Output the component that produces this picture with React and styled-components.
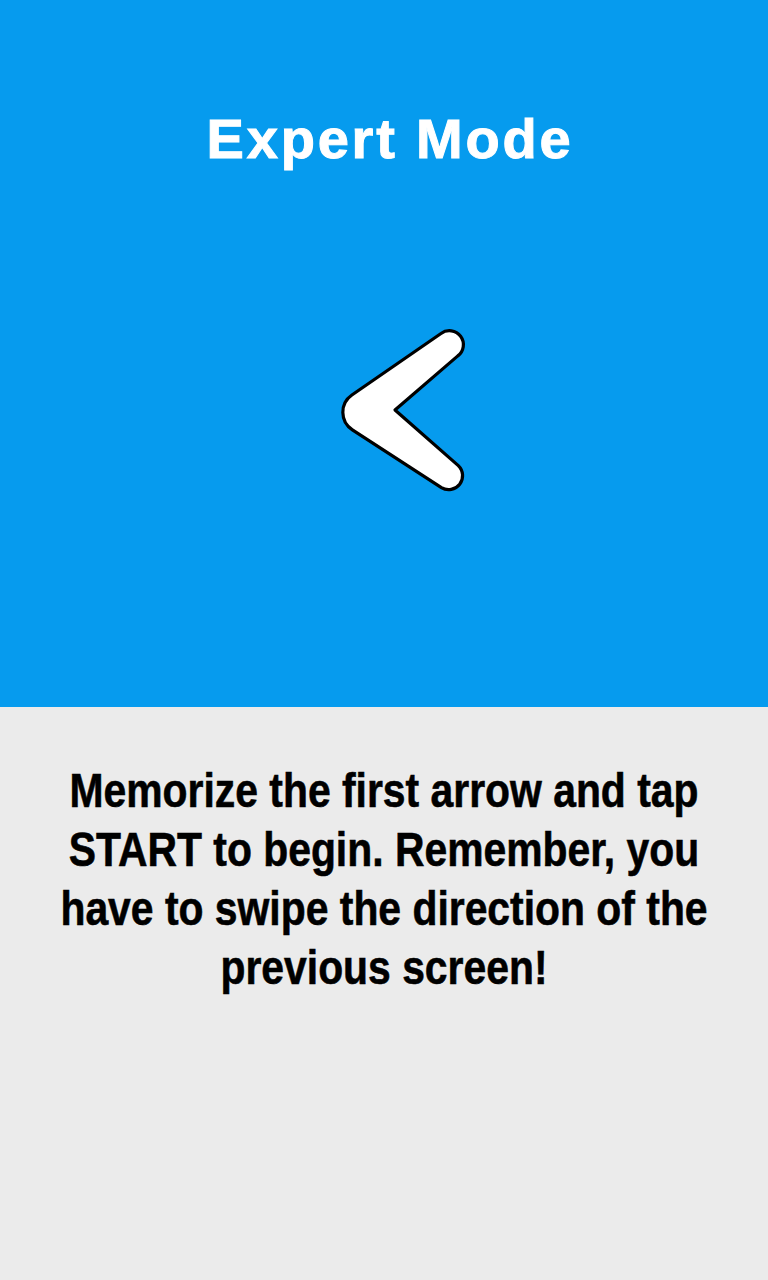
import React from "react";
import styled, { createGlobalStyle } from "styled-components";

const Global = createGlobalStyle`
  html, body { margin: 0; padding: 0; }
  body { background: #ebebeb; font-family: "Liberation Sans", Arial, sans-serif; }
`;

const Screen = styled.div`
  width: 768px;
  height: 1280px;
  display: flex;
  flex-direction: column;
  background: #ebebeb;
  overflow: hidden;
`;

const Hero = styled.section`
  height: 707px;
  flex-shrink: 0;
  background: #069bee;
  display: flex;
  flex-direction: column;
  align-items: center;
`;

const Title = styled.h1`
  margin: 103px 0 0 12px;
  color: #ffffff;
  font-family: "Liberation Sans", Arial, sans-serif;
  font-weight: 700;
  font-size: 56px;
  line-height: 72px;
  letter-spacing: 2.8px;
  -webkit-text-stroke: 1px #ffffff;
`;

const ArrowSvg = styled.svg`
  display: block;
  margin: 145px 0 0 37px;
  width: 145px;
  height: 180px;
`;

const Body = styled.section`
  flex: 1;
  display: flex;
  justify-content: center;
  padding-top: 54px;
`;

const Message = styled.p`
  margin: 0;
  flex-shrink: 0;
  width: 820px;
  text-align: center;
  color: #000;
  font-family: "Liberation Sans", Arial, sans-serif;
  font-weight: 700;
  font-size: 49px;
  line-height: 59px;
  -webkit-text-stroke: 0.6px #000000;
  transform: scaleX(0.834);
  transform-origin: 50% 0;
`;

const chevronPath =
  "M 351.9 395 L 441 333.5 A 14 14 0 0 1 457.8 355.9 L 395 410 L 458.3 465.6 A 14 14 0 0 1 441.4 487.7 L 352.4 429.9 A 21 21 0 0 1 351.9 395 Z";

function Chevron() {
  return (
    <ArrowSvg viewBox="330 320 145 180" xmlns="http://www.w3.org/2000/svg">
      <path d={chevronPath} fill="#ffffff" stroke="#000000" strokeWidth="3.2" strokeLinejoin="round" />
    </ArrowSvg>
  );
}

export default function App() {
  return (
    <>
      <Global />
      <Screen>
        <Hero>
          <Title>Expert Mode</Title>
          <Chevron />
        </Hero>
        <Body>
          <Message>
            Memorize the first arrow and tap
            <br />
            START to begin. Remember, you
            <br />
            have to swipe the direction of the
            <br />
            previous screen!
          </Message>
        </Body>
      </Screen>
    </>
  );
}
